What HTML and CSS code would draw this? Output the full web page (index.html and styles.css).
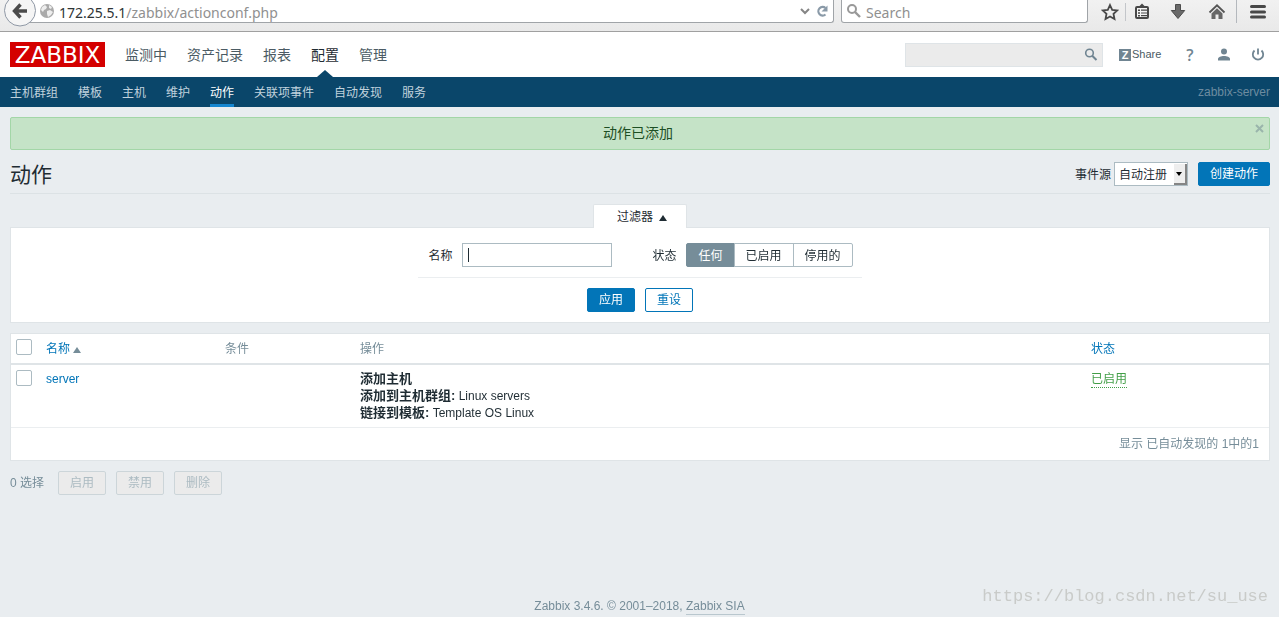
FILE: index.html
```html
<!DOCTYPE html>
<html lang="zh-CN">
<head>
<meta charset="utf-8">
<title>动作</title>
<link rel="stylesheet" href="styles.css">
</head>
<body>
<div class="toolbar">
  <button class="back" type="button" aria-label="Back">
    <svg width="38" height="31" viewBox="0 0 38 31"><circle cx="20" cy="10.500" r="15.500" fill="#f5f5f5" stroke="#8f98a5"/><path d="M20.500 4.500 14.500 11l6 6.500M15 11h12" fill="none" stroke="#4b4b4b" stroke-width="3.400"/></svg>
  </button>
  <div class="address">
    <svg width="16" height="16" viewBox="0 0 16 16"><circle cx="8" cy="8" r="7" fill="#aaa"/><path d="M3 4l3-2 2 2-1 2-2 1-1 2-2-2zM8 8l3-1 3 2-2 3-3 2-1-3zM10 2l3 2-1 2-2-1z" fill="#eee"/></svg>
    <span class="url"><span class="host">172.25.5.1</span>/zabbix/actionconf.php</span>
    <svg width="12" height="16" viewBox="0 0 12 16"><path d="M2 6l4 4 4-4" fill="none" stroke="#858585" stroke-width="2"/></svg>
    <svg width="14" height="16" viewBox="0 0 14 16"><path d="M10.500 11.500a4.300 4.300 0 1 1 0-6.500" fill="none" stroke="#8a9aa8" stroke-width="2.200"/><path d="M12.500 2.500v6h-6z" fill="#8a9aa8"/></svg>
  </div>
  <label class="web-search">
    <svg width="16" height="16" viewBox="0 0 16 16"><circle cx="6" cy="6" r="4" fill="none" stroke="#999" stroke-width="2"/><path d="M9 9l5 5" stroke="#999" stroke-width="2.400"/></svg>
    <input type="text" placeholder="Search" aria-label="Search">
  </label>
  <div class="tools">
    <button class="tool tool-star" type="button" aria-label="Bookmark"><svg width="18" height="18" viewBox="0 0 18 18"><path d="M9 2l2.200 4.800 5 .6-3.700 3.500 1 5.100L9 13.500 4.500 16l1-5.100L1.800 7.400l5-.6z" fill="none" stroke="#484848" stroke-width="1.800"/></svg></button>
    <span class="rule"></span>
    <button class="tool tool-list" type="button" aria-label="Bookmarks list"><svg width="16" height="18" viewBox="0 0 16 18"><rect x="2" y="4" width="12" height="11" rx="1" fill="#f4f4f4" stroke="#484848" stroke-width="2"/><path d="M5 3.500 8 .5l3 3V5H5zM4 6.500h2V8H4zM4 9.200h2v1.500H4zM4 12h2v1.500H4z" fill="#484848"/><path d="M7 7.200h6M7 10h6M7 12.700h6" stroke="#484848" stroke-width="1.200"/></svg></button>
    <button class="tool tool-down" type="button" aria-label="Downloads"><svg width="16" height="18" viewBox="0 0 16 18"><path d="M5.500 1.500h5v6h4.200L8 15.500 1.300 7.500h4.200z" fill="#6a6a6a" stroke="#4c4c4c"/></svg></button>
    <button class="tool" type="button" aria-label="Home"><svg width="18" height="18" viewBox="0 0 18 18"><path d="M1.500 9.500 9 2.300l7.500 7.200" fill="none" stroke="#555" stroke-width="1.800"/><path d="M3.500 10.500 9 5.300l5.500 5.200V16h-4v-4.500h-3V16h-4z" fill="#666"/></svg></button>
    <span class="rule rule-tall"></span>
    <button class="tool tool-menu" type="button" aria-label="Menu"><svg width="18" height="18" viewBox="0 0 18 18"><path d="M2.500 3.500h13M2.500 9h13M2.500 14h13" stroke="#484848" stroke-width="3" stroke-linecap="round"/></svg></button>
  </div>
</div>

<header class="header">
  <a class="logo" href="#">ZABBIX</a>
  <nav class="main-nav">
    <a href="#">监测中</a><a href="#">资产记录</a><a href="#">报表</a><a class="active" href="#">配置</a><a href="#">管理</a>
  </nav>
  <form class="site-search">
    <input type="text" aria-label="搜索">
    <button type="button" aria-label="搜索"><svg width="14" height="14" viewBox="0 0 14 14"><circle cx="5.500" cy="5" r="3.800" fill="none" stroke="#708592" stroke-width="1.600"/><path d="M8.200 7.700l4.300 4.300" stroke="#708592" stroke-width="2"/></svg></button>
  </form>
  <div class="user-nav">
    <a class="share" href="#"><span class="z">Z</span>Share</a>
    <a class="help" href="#">?</a>
    <a class="icon" href="#" aria-label="用户"><svg width="14" height="14" viewBox="0 0 14 14"><circle cx="7" cy="3.500" r="3" fill="#708592"/><path d="M1 12.500v-1.500c0-2 3-3 6-3s6 1 6 3v1.500z" fill="#708592"/></svg></a>
    <a class="icon" href="#" aria-label="退出"><svg width="14" height="14" viewBox="0 0 14 14"><path d="M3.500 2.500a5.200 5.200 0 1 0 7 0M7 .5v6" fill="none" stroke="#708592" stroke-width="1.800"/></svg></a>
  </div>
</header>

<nav class="sub-nav">
  <a href="#">主机群组</a><a href="#">模板</a><a href="#">主机</a><a href="#">维护</a><a class="active" href="#">动作</a><a href="#">关联项事件</a><a href="#">自动发现</a><a href="#">服务</a>
  <span class="server-name">zabbix-server</span>
</nav>

<main class="content">
  <div class="message">
    <span>动作已添加</span>
    <button class="close" type="button" aria-label="关闭"><svg width="9" height="9" viewBox="0 0 9 9"><path d="M1 1l7 7M8 1L1 8" stroke="#9ab5ab" stroke-width="2"/></svg></button>
  </div>

  <div class="title-row">
    <h1>动作</h1>
    <div class="title-tools">
      <label for="source">事件源</label>
      <div class="select">
        <select id="source"><option>自动注册</option></select>
        <span class="select-arrow"></span>
      </div>
      <button class="button primary" type="button">创建动作</button>
    </div>
  </div>

  <section class="filter">
    <button class="filter-tab" type="button">过滤器<span class="up"></span></button>
    <form class="filter-panel">
      <div class="filter-fields">
        <div class="field"><label for="name">名称</label><input class="name-input" id="name" type="text" autofocus></div>
        <div class="field"><label>状态</label>
          <div class="segments">
            <label><input type="radio" name="status" checked><span>任何</span></label><label><input type="radio" name="status"><span>已启用</span></label><label><input type="radio" name="status"><span>停用的</span></label>
          </div>
        </div>
      </div>
      <div class="filter-buttons">
        <button class="button primary" type="button">应用</button>
        <button class="button outline" type="button">重设</button>
      </div>
    </form>
  </section>

  <table class="list">
    <colgroup><col class="col-check"><col class="col-name"><col class="col-condition"><col class="col-operation"><col class="col-status"></colgroup>
    <thead>
      <tr><th><input type="checkbox" aria-label="全选"></th><th><a href="#">名称<span class="up up-grey"></span></a></th><th>条件</th><th>操作</th><th><a href="#">状态</a></th></tr>
    </thead>
    <tbody>
      <tr>
        <td><input type="checkbox" aria-label="server"></td>
        <td><a href="#">server</a></td>
        <td></td>
        <td><b>添加主机</b><br><b>添加到主机群组:</b> Linux servers<br><b>链接到模板:</b> Template OS Linux</td>
        <td><a class="enabled" href="#">已启用</a></td>
      </tr>
    </tbody>
    <tfoot><tr><td colspan="5">显示 已自动发现的 1中的1</td></tr></tfoot>
  </table>

  <div class="bulk">
    <span class="selected">0 选择</span>
    <button class="button" type="button" disabled>启用</button>
    <button class="button" type="button" disabled>禁用</button>
    <button class="button" type="button" disabled>删除</button>
  </div>
</main>

<footer class="footer">Zabbix 3.4.6. © 2001–2018, <a href="#">Zabbix SIA</a></footer>
<div class="watermark">https://blog.csdn.net/su_use</div>
</body>
</html>
```

FILE: styles.css
```css
* { box-sizing: border-box; }
body {
  margin: 0;
  min-height: 100vh;
  display: flex;
  flex-direction: column;
  position: relative;
  background: #e9edf0;
  color: #1f2c33;
  font: 12px/17px "Liberation Sans", "Noto Sans CJK SC", sans-serif;
}
a { color: #0275b8; text-decoration: none; }
button, input, select { font: inherit; color: inherit; margin: 0; }
button { padding: 0; border: 0; background: none; }
svg { display: block; flex: none; }

.toolbar {
  display: flex;
  align-items: flex-start;
  height: 32px;
  background: linear-gradient(#f1f1f1, #e9e9e9);
  border-bottom: 1px solid #a0a0a0;
  font-family: "Noto Sans", sans-serif;
}
.back { position: relative; z-index: 1; margin-right: -16px; }
.address, .web-search {
  display: flex;
  align-items: center;
  height: 23px;
  background: #fff;
  border: 1px solid #a0a4a8;
  border-top: 0;
  border-radius: 0 0 3px 3px;
}
.address { flex: 1; gap: 4px; padding: 0 4px 0 16px; margin-right: 7px; }
.url { flex: 1; padding-top: 2px; color: #909090; font-size: 14px; }
.host { color: #2e3436; }
.web-search { width: 247px; padding-left: 4px; gap: 4px; }
.web-search input { flex: 1; min-width: 0; padding: 2px 0 0; border: 0; outline: 0; background: none; font-size: 14px; }
.web-search input::placeholder { color: #909090; opacity: 1; }
.tools { display: flex; align-items: center; height: 23px; padding-left: 7px; }
.tool { display: flex; justify-content: center; width: 38px; }
.tool-star { width: 30px; }
.tool-list { width: 32px; }
.tool-down { width: 40px; }
.tool-menu { width: 42px; }
.rule { width: 1px; height: 18px; background: #c3c6ca; }
.rule-tall { height: 23px; background: #b4b8bd; }

.header { display: flex; align-items: center; height: 45px; padding: 0 10px; background: #fff; }
.logo {
  width: 95px;
  height: 25px;
  background: #d40000;
  color: #fff;
  font: 23px/26px "DejaVu Sans", sans-serif;
  text-align: center;
}
.main-nav { display: flex; gap: 20px; margin-left: 20px; height: 45px; font-size: 14px; line-height: 47px; }
.main-nav a { position: relative; color: #4b5b64; }
.main-nav .active { color: #1f2c33; }
.main-nav .active::after {
  content: "";
  position: absolute;
  bottom: 0;
  left: 50%;
  margin-left: -8px;
  border: 8px solid transparent;
  border-top: 0;
  border-bottom: 7px solid #0a466a;
}
.site-search { display: flex; align-items: center; width: 198px; height: 24px; margin-left: auto; background: #ebebeb; border: 1px solid #dfe4e7; }
.site-search input { flex: 1; min-width: 0; border: 0; outline: 0; background: none; }
.site-search button { padding-right: 4px; }
.user-nav { display: flex; align-items: center; margin-left: 16px; padding-right: 4px; font-size: 11px; }
.share { display: flex; align-items: center; gap: 1px; width: 64px; color: #4b5b64; }
.z { width: 12px; height: 12px; background: #708592; color: #fff; font-weight: bold; line-height: 12px; text-align: center; }
.help { width: 14px; color: #708592; font: 600 16px/20px "Open Sans", sans-serif; text-align: center; }
.icon { margin-left: 20px; }
.help, .icon { flex: none; }

.sub-nav { display: flex; gap: 20px; height: 30px; padding: 0 9px 0 10px; background: #0a466a; line-height: 32px; }
.sub-nav a { height: 30px; color: #c0d2dd; }
.sub-nav .active { color: #fff; border-bottom: 3px solid #1586d0; }
.server-name { margin-left: auto; line-height: 30px; color: #6d8ca0; }

.content { padding: 10px 9px 10px 10px; }
.message {
  position: relative;
  padding: 7px 30px 7px 26px;
  background: #c5e3c7;
  border: 1px solid #a3d6a7;
  border-radius: 2px;
  color: #1d4f24;
  font-size: 14px;
  text-align: center;
}
.close { position: absolute; top: 6px; right: 5px; }
.title-row { display: flex; align-items: center; justify-content: space-between; margin-top: 5px; height: 39px; border-bottom: 1px solid #dce2e5; }
h1 { margin: 0; padding-top: 2px; font-size: 21px; font-weight: normal; line-height: 24px; }
.title-tools { display: flex; align-items: center; }
.title-tools label, .field > label { padding-top: 2px; }
.select { position: relative; margin: 0 10px 0 3px; }
select { appearance: none; display: block; width: 74px; height: 24px; padding: 2px 4px 0; border: 1px solid #acbbc2; border-radius: 0; background: #fff; }
.select-arrow {
  position: absolute;
  top: 2px;
  right: 1px;
  display: grid;
  place-items: center;
  width: 13px;
  height: 21px;
  background: #eee;
  border: 2px solid #858585;
  border-width: 0 2px 2px 0;
  pointer-events: none;
}
.select-arrow::after { content: ""; border: 3px solid transparent; border-top: 4px solid #000; border-bottom: 0; }
.button { height: 24px; padding: 1px 11px 0; border: 1px solid #ccd5d9; border-radius: 2px; line-height: 21px; }
.primary { background: #0275b8; border-color: #0275b8; color: #fff; }
.outline { background: #fff; border-color: #0275b8; color: #0275b8; }
.button:disabled { background: #ebebeb; color: #acbbc2; }

.filter { display: flex; flex-direction: column; align-items: center; margin-top: 10px; }
.filter-tab {
  position: relative;
  height: 24px;
  width: 94px;
  padding: 2px 0 0 4px;
  margin-bottom: -1px;
  background: #fff;
  border: 1px solid #dfe4e7;
  border-bottom: 0;
  border-radius: 2px 2px 0 0;
}
.up { display: inline-block; margin-left: 6px; border: 4px solid transparent; border-top: 0; border-bottom: 6px solid #1f2c33; }
.up-grey { margin-left: 3px; border-bottom-color: #768d99; }
.filter-panel { width: 100%; display: flex; flex-direction: column; align-items: center; padding: 15px 0 10px; background: #fff; border: 1px solid #dfe4e7; }
.filter-fields { display: flex; gap: 40px; padding: 0 9px 10px 10px; border-bottom: 1px solid #ebeef0; }
.field { display: flex; align-items: center; gap: 10px; }
.name-input {
  width: 150px;
  height: 24px;
  padding: 0 5px;
  border: 1px solid #acbbc2;
  outline: 0;
  background: #fff;
}
.name-input:focus { caret-color: transparent; background: linear-gradient(#1f2c33, #1f2c33) 5px 4px / 1px 14px no-repeat #fff; }
.segments { display: flex; }
.segments label { position: relative; margin-left: -1px; }
.segments label:first-child { margin-left: 0; }
.segments input { position: absolute; opacity: 0; }
.segments span { display: block; height: 24px; padding: 0 11px; border: 1px solid #acbbc2; line-height: 24px; }
.segments label:first-child span { border-radius: 2px 0 0 2px; }
.segments label:last-child span { border-radius: 0 2px 2px 0; }
.segments input:checked + span { background: #768d99; border-color: #768d99; color: #fff; }
.filter-buttons { display: flex; gap: 10px; padding-top: 10px; }

.list { width: 100%; margin-top: 10px; table-layout: fixed; border-collapse: separate; border-spacing: 0; background: #fff; border: 1px solid #dfe4e7; }
.col-check { width: 30px; }
.col-name { width: 179px; }
.col-condition { width: 135px; }
.col-status { width: 183px; }
.list th, .list td { padding: 6px 5px 5px; text-align: left; vertical-align: top; }
.list th { height: 31px; padding-top: 7px; border-bottom: 2px solid #dfe4e7; color: #768d99; font-weight: normal; }
.list tbody td { border-bottom: 1px solid #ebeef0; }
.list b { font-size: 13px; line-height: 13px; }
.list tfoot td { height: 32px; padding: 8px 10px 7px; color: #768d99; text-align: right; }
.list input { appearance: none; display: block; width: 16px; height: 16px; margin-top: -1px; border: 1px solid #acbbc2; border-radius: 2px; background: #fff; }
.list th input { margin-top: -2px; }
.enabled { display: inline-block; color: #429e47; line-height: 16px; border-bottom: 1px dotted #429e47; }
.bulk { display: flex; align-items: center; gap: 10px; margin-top: 10px; }
.selected { margin-right: 4px; color: #768d99; }

.footer { margin-top: auto; padding-bottom: 2px; color: #768d99; text-align: center; }
.footer a { display: inline-block; color: inherit; line-height: 15px; border-bottom: 1px solid #b9c7ce; }
.watermark { position: absolute; right: 11px; bottom: 8px; color: #c9cbc9; font: 17px/24px "Liberation Mono", monospace; }
```
